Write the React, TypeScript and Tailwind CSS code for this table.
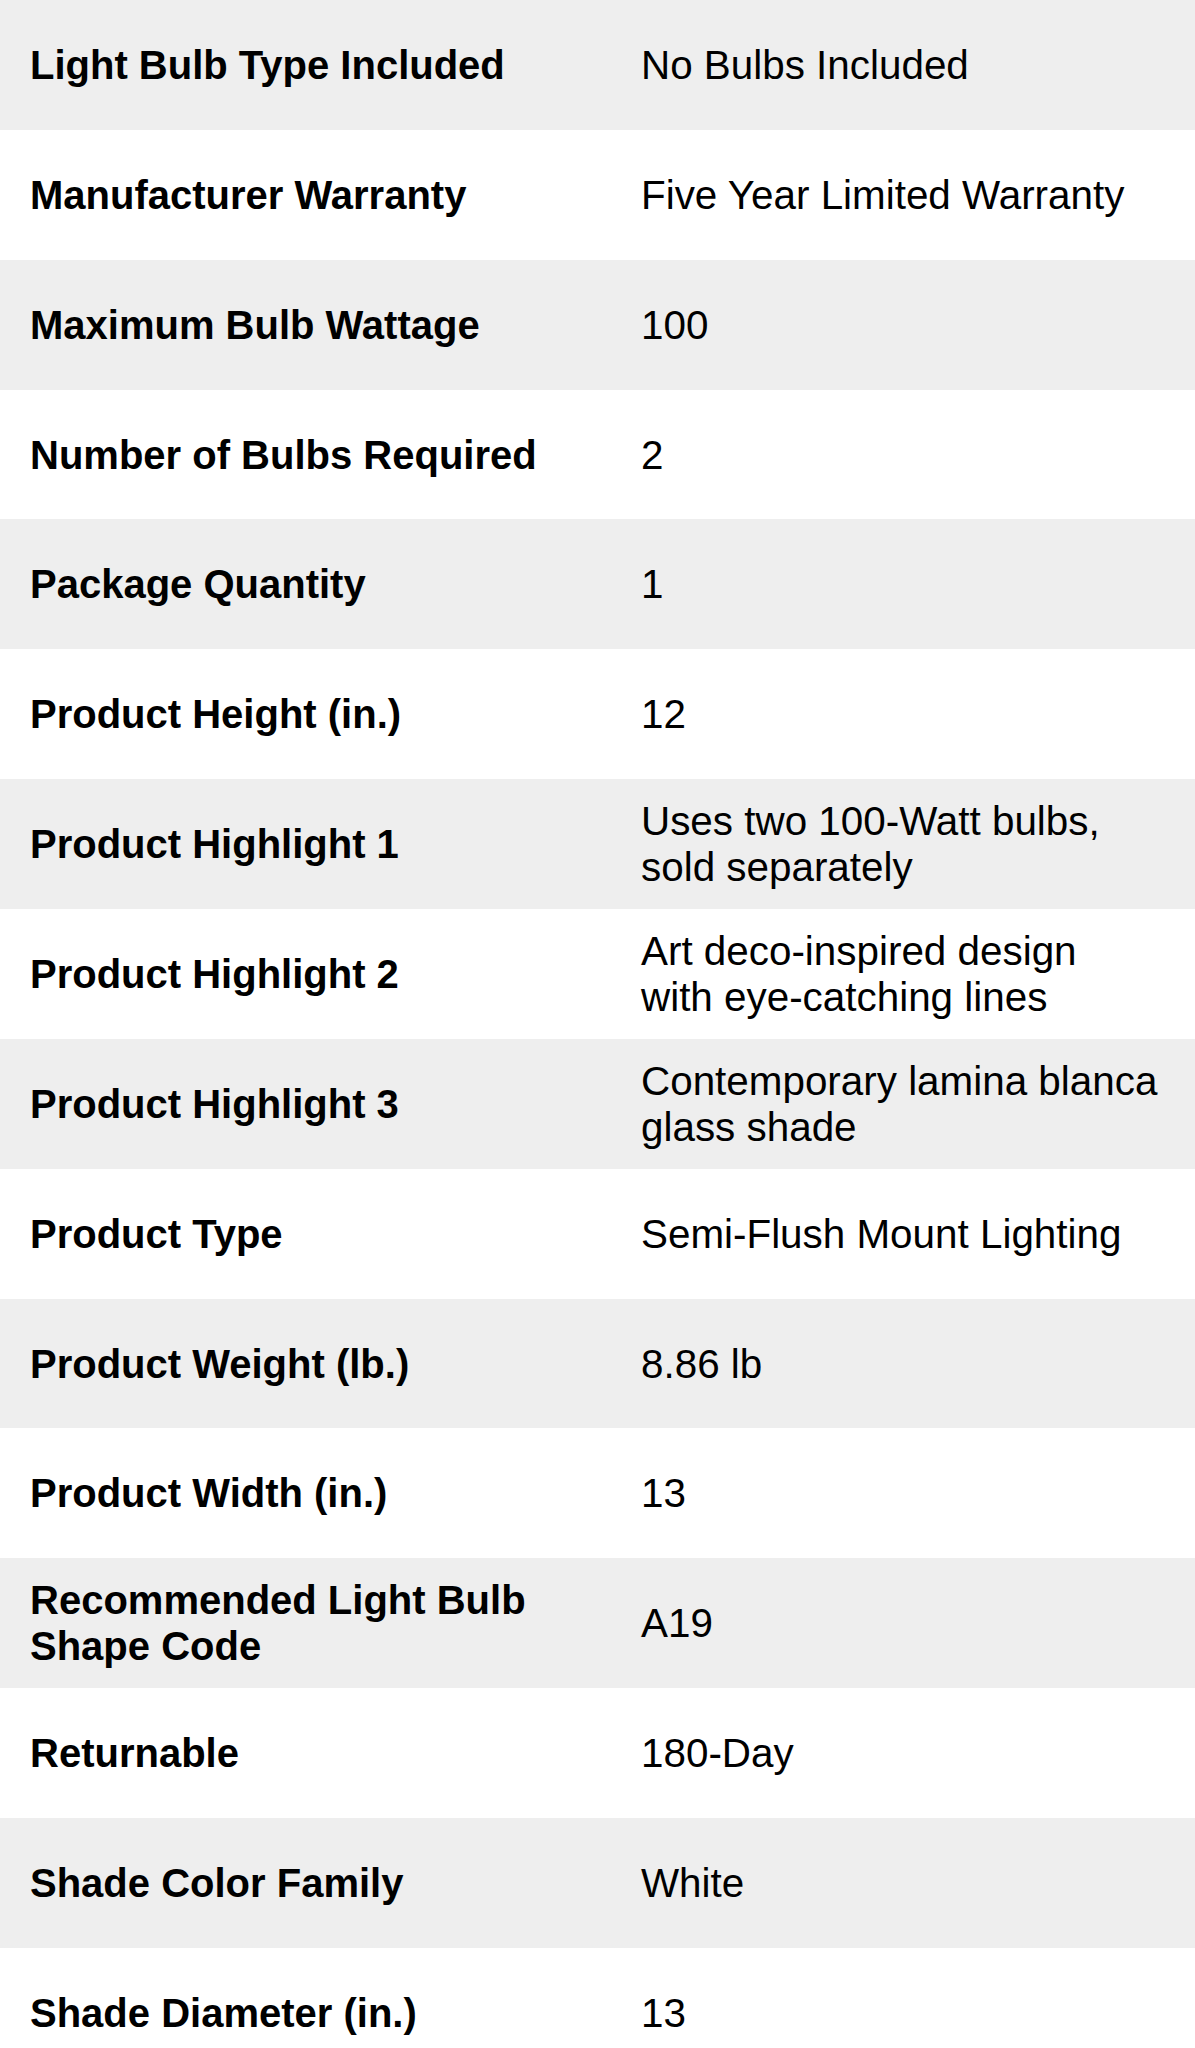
const specs: { label: string; value: string[] }[] = [
  { label: "Light Bulb Type Included", value: ["No Bulbs Included"] },
  { label: "Manufacturer Warranty", value: ["Five Year Limited Warranty"] },
  { label: "Maximum Bulb Wattage", value: ["100"] },
  { label: "Number of Bulbs Required", value: ["2"] },
  { label: "Package Quantity", value: ["1"] },
  { label: "Product Height (in.)", value: ["12"] },
  { label: "Product Highlight 1", value: ["Uses two 100-Watt bulbs,", "sold separately"] },
  { label: "Product Highlight 2", value: ["Art deco-inspired design", "with eye-catching lines"] },
  { label: "Product Highlight 3", value: ["Contemporary lamina blanca", "glass shade"] },
  { label: "Product Type", value: ["Semi-Flush Mount Lighting"] },
  { label: "Product Weight (lb.)", value: ["8.86 lb"] },
  { label: "Product Width (in.)", value: ["13"] },
  { label: "Recommended Light Bulb Shape Code", value: ["A19"] },
  { label: "Returnable", value: ["180-Day"] },
  { label: "Shade Color Family", value: ["White"] },
  { label: "Shade Diameter (in.)", value: ["13"] },
];

export default function App() {
  return (
    <div className="min-h-screen bg-white font-['Liberation_Sans',Arial,sans-serif] text-black">
      {/* Specifications table */}
      <div className="flex flex-col">
        {specs.map((row, i) => (
          <div
            key={row.label}
            className={`grid h-[129.87px] grid-cols-[581px_1fr] items-center gap-x-[30px] px-[30px] leading-[46px] ${
              i % 2 === 0 ? "bg-[#eeeeee]" : "bg-white"
            }`}
          >
            <div className="text-[40px] font-bold">{row.label}</div>
            <div className="text-[40.4px]">
              {row.value.map((line) => (
                <div key={line} className="whitespace-nowrap">
                  {line}
                </div>
              ))}
            </div>
          </div>
        ))}
      </div>
    </div>
  );
}
